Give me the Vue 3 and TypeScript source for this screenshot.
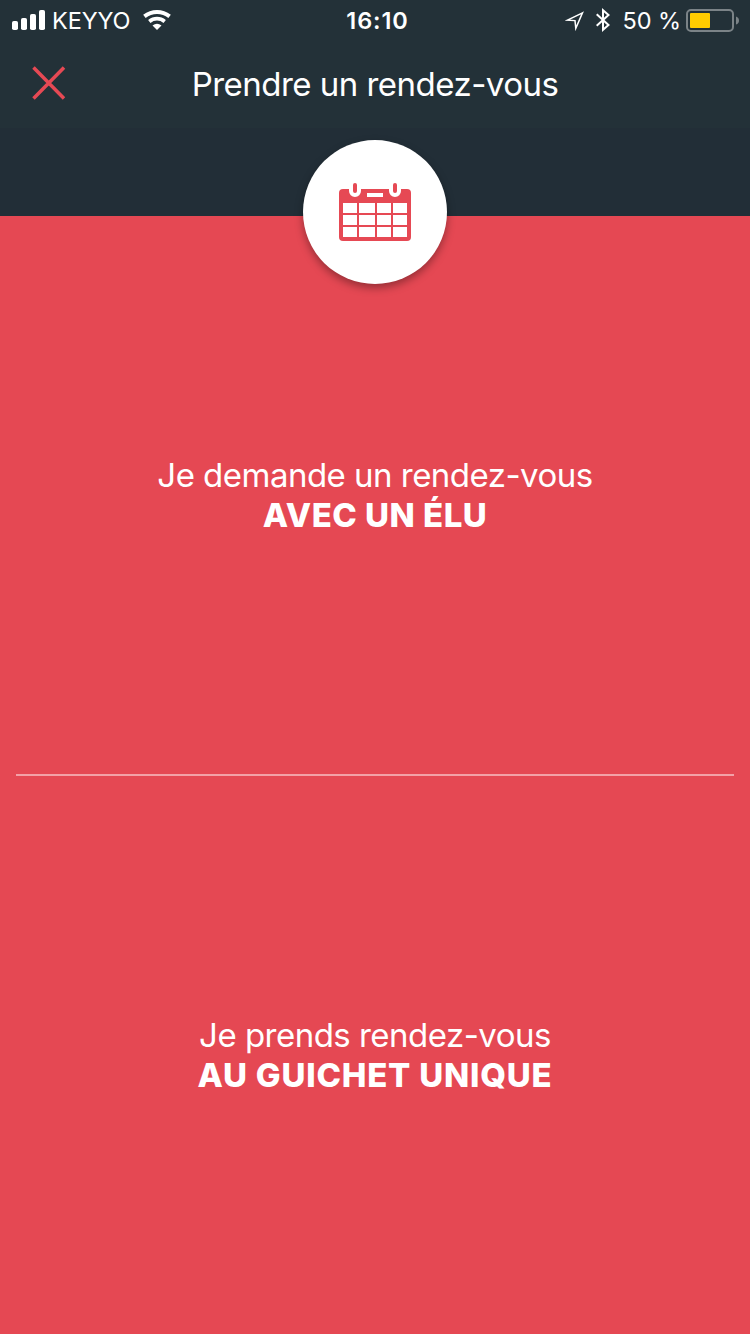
<script setup lang="ts">
interface Choice {
  id: string
  lead: string
  target: string
}

const choices: Choice[] = [
  { id: 'elu', lead: 'Je demande un rendez-vous', target: 'AVEC UN ÉLU' },
  { id: 'guichet', lead: 'Je prends rendez-vous', target: 'AU GUICHET UNIQUE' },
]

const columns = [
  { x: 4, w: 14 },
  { x: 20, w: 16 },
  { x: 38, w: 14 },
  { x: 54, w: 14 },
]
const rows = [20, 32, 44]
</script>

<template>
  <main class="screen">
    <header class="header">
      <div class="status">
        <div class="side">
          <svg class="signal" width="33" height="20" viewBox="0 0 33 20" fill="#fff">
            <rect x="0" y="11" width="6" height="9" rx="1.8" />
            <rect x="9" y="8" width="6" height="12" rx="1.8" />
            <rect x="18" y="4" width="6" height="16" rx="1.8" />
            <rect x="27" y="0" width="6" height="20" rx="1.8" />
          </svg>
          <span class="carrier">KEYYO</span>
          <svg class="wifi" width="28" height="20" viewBox="0 0 28 20" fill="none" stroke="#fff">
            <path d="M1.4 6.4Q7 2 14 2T26.600 6.400" stroke-width="4" />
            <path d="M6.300 11.500Q9.700 8.700 14 8.700T21.700 11.500" stroke-width="3.700" />
            <path d="M9.500 15.500Q14 11.900 18.500 15.500L14 20Z" fill="#fff" stroke="none" />
          </svg>
        </div>
        <span class="clock">16:10</span>
        <div class="side end">
          <svg class="location" width="19" height="20" viewBox="0 0 19 20" fill="none" stroke="#fff" stroke-width="1.500">
            <path d="M17.500 1.800L2.500 9.200L10 9.600L10.800 17.300Z" stroke-linejoin="miter" stroke-miterlimit="6" />
          </svg>
          <svg class="bluetooth" width="14" height="24" viewBox="0 0 14 24" fill="none" stroke="#fff" stroke-width="2">
            <path d="M.7 6.300L12.500 17L7 21.800V2.200L12.500 7L.7 17.700" />
          </svg>
          <span class="percent">50 %</span>
          <svg class="battery" width="54" height="24" viewBox="0 0 54 24">
            <rect x="1" y="1" width="46" height="21" rx="4" fill="none" stroke="#7b8387" stroke-width="2" />
            <rect x="4" y="4" width="20" height="15" rx="1" fill="#fc0" />
            <path d="M50 7.500Q53 8.500 53 11.500T50 15.500Z" fill="#7b8387" />
          </svg>
        </div>
      </div>
      <div class="navbar">
        <button class="close" type="button" aria-label="Fermer">
          <svg width="34" height="34" viewBox="0 0 34 34" fill="none" stroke="#e64954" stroke-width="3.500">
            <path d="M1.500 1.500L32 32.500M32 1.500L1.500 32.500" />
          </svg>
        </button>
        <h1 class="title">Prendre un rendez-vous</h1>
      </div>
      <div class="badge">
        <svg width="72" height="58" viewBox="0 0 72 58">
          <rect x="0" y="6" width="72" height="52" rx="4" fill="#e64954" />
          <g fill="#fff">
            <path d="M10 4H22V8A6 6 0 0 1 10 8ZM50 4H62V8A6 6 0 0 1 50 8Z" />
            <rect x="28" y="10" width="16" height="4" />
            <template v-for="y in rows" :key="y">
              <rect v-for="c in columns" :key="c.x" :x="c.x" :y="y" :width="c.w" height="10" />
            </template>
          </g>
          <rect x="14" y="0" width="4" height="10" rx="2" fill="#e64954" />
          <rect x="54" y="0" width="4" height="10" rx="2" fill="#e64954" />
        </svg>
      </div>
    </header>
    <section v-for="choice in choices" :key="choice.id" class="choice" :class="choice.id">
      <span class="lead">{{ choice.lead }}</span>
      <strong class="target">{{ choice.target }}</strong>
    </section>
  </main>
</template>

<style>
body {
  margin: 0;
}
</style>

<style scoped>
.screen {
  width: 750px;
  height: 1334px;
  display: flex;
  flex-direction: column;
  overflow: hidden;
  background: #e54853;
  color: #fff;
  font-family: Inter, "Liberation Sans", sans-serif;
}
.header {
  position: relative;
  flex: none;
  height: 216px;
  background: linear-gradient(#233138 128px, #222e37 128px);
}
.status {
  display: grid;
  grid-template-columns: 1fr auto 1fr;
  height: 40px;
  padding: 0 11px 0 12px;
  align-items: center;
}
.side {
  display: flex;
  align-items: center;
  white-space: nowrap;
}
.end {
  justify-content: flex-end;
}
.carrier,
.clock,
.percent {
  padding-top: 2px;
  line-height: 38px;
  font-size: 23.500px;
}
.carrier {
  margin-left: 7px;
  width: 79px;
  font-weight: 400;
  letter-spacing: -0.100px;
}
.wifi {
  margin-left: 12px;
}
.clock {
  margin-left: 4px;
  font-weight: 600;
  letter-spacing: 0.900px;
}
.location {
  margin-right: 12px;
  margin-top: 2px;
}
.bluetooth {
  margin-right: 13px;
}
.percent {
  margin-right: 5px;
  font-weight: 400;
  letter-spacing: -0.100px;
}
.battery {
  margin-right: -1px;
  margin-top: 2px;
}
.navbar {
  display: grid;
  grid-template-columns: 98px 1fr 98px;
  height: 88px;
  align-items: center;
}
.close {
  width: 98px;
  height: 88px;
  padding: 0 0 2px 32px;
  border: 0;
  background: none;
  display: flex;
  align-items: center;
}
.title {
  margin: 0;
  text-align: center;
  font-size: 33px;
  font-weight: 400;
  letter-spacing: -0.520px;
  line-height: 40px;
}
.badge {
  position: absolute;
  left: 303px;
  top: 140px;
  width: 144px;
  height: 144px;
  border-radius: 50%;
  background: #fff;
  display: flex;
  align-items: center;
  justify-content: center;
  box-shadow: 0 4px 8px rgba(0, 0, 0, 0.350);
}
.choice {
  flex: 1;
  display: flex;
  flex-direction: column;
  align-items: center;
  justify-content: center;
  margin: 0 16px;
  line-height: 40px;
  font-size: 33px;
}
.choice + .choice {
  border-top: 2px solid #f3a1a7;
}
.lead {
  font-weight: 400;
  letter-spacing: -0.520px;
}
.target {
  font-weight: 800;
  letter-spacing: 0.500px;
}
.guichet .target {
  letter-spacing: 0.780px;
}
</style>
